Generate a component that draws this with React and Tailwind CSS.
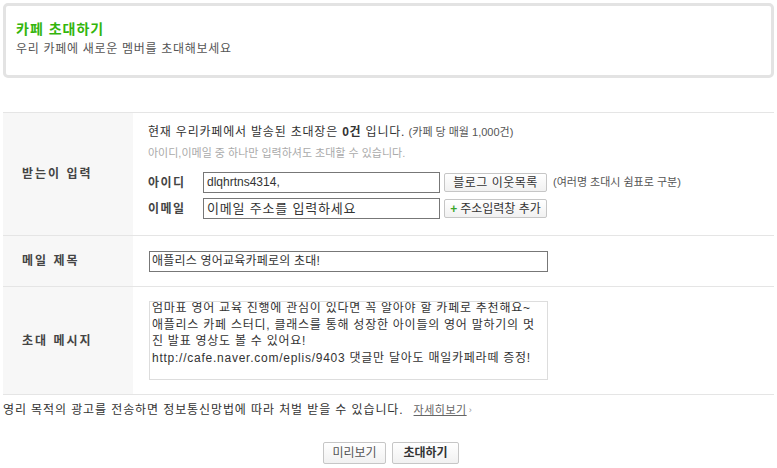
import React from 'react';

const font = { fontFamily: '"Liberation Sans", "Noto Sans CJK KR", sans-serif' };

const Btn = ({ children, className = '' }) => (
  <button
    className={`flex items-center justify-center border border-[#c6c6c6] rounded-[2px] bg-gradient-to-b from-white to-[#f1f1f1] text-[#333] ${className}`}
  >
    {children}
  </button>
);

const Row = ({ label, className = '', children }) => (
  <div className={`flex border-b border-[#e5e5e5] ${className}`}>
    <div className="w-[130px] shrink-0 bg-[#f7f7f7] flex items-center pl-[19px] text-[12px] font-bold text-[#444] tracking-[2px]">
      {label}
    </div>
    <div className="flex-1 pl-[15px]">{children}</div>
  </div>
);

export default function App() {
  return (
    <div className="w-[777px] h-[468px] bg-white overflow-hidden text-[#333]" style={font}>
      <div className="mx-[3px] mt-[3px] h-[75px] border-[3px] border-[#e3e3e3] rounded-[5px] pl-[10px] pt-[14px]">
        <h1 className="text-[14px] leading-[18px] font-bold text-[#33b50c] tracking-[1px]">카페 초대하기</h1>
        <p className="mt-[3px] text-[12px] leading-[16px] text-[#555] tracking-[0.7px]">우리 카페에 새로운 멤버를 초대해보세요</p>
      </div>

      <div className="mx-[3px] mt-[34px] border-t border-[#e5e5e5]">
        <Row label="받는이 입력" className="h-[123px]">
          <div className="pt-[11px]">
            <p className="text-[12px] leading-[16px] h-[16px]">
              <span className="tracking-[0.8px]">현재 우리카페에서 발송된 초대장은 <b>0건</b> 입니다.</span>{' '}
              <span className="text-[11px] text-[#555]">(카페 당 매월 1,000건)</span>
            </p>
            <p className="mt-[5px] text-[11px] leading-[16px] h-[16px] text-[#aaa]">
              아이디,이메일 중 하나만 입력하셔도 초대할 수 있습니다.
            </p>
            <div className="mt-[11px] flex items-center">
              <span className="w-[55px] text-[12px] font-bold text-[#444] tracking-[1.5px]">아이디</span>
              <div className="w-[237px] h-[21px] border border-[#777] pl-[3px] text-[12px] leading-[19px]">dlqhrtns4314,</div>
              <Btn className="ml-[4px] w-[103px] h-[19px] text-[12px] tracking-[0.5px]">블로그 이웃목록</Btn>
              <span className="ml-[6px] text-[11px] text-[#555]">(여러명 초대시 쉼표로 구분)</span>
            </div>
            <div className="mt-[5px] flex items-center">
              <span className="w-[55px] text-[12px] font-bold text-[#444] tracking-[1.5px]">이메일</span>
              <div className="w-[237px] h-[21px] border border-[#777] pl-[3px] text-[13px] leading-[19px] tracking-[0.8px]">이메일 주소를 입력하세요</div>
              <Btn className="ml-[4px] w-[103px] h-[19px] text-[12px]">
                <span className="text-[#3aa52a] font-bold mr-[3px]">+</span>주소입력창 추가
              </Btn>
            </div>
          </div>
        </Row>

        <Row label="메일 제목" className="h-[51px]">
          <div className="pt-[15px] pl-[1px]">
            <div className="w-[399px] h-[21px] border border-[#777] pl-[2px] text-[12px] leading-[19px] tracking-[0.2px]">
              애플리스 영어교육카페로의 초대!
            </div>
          </div>
        </Row>

        <Row label="초대 메시지" className="h-[108px]">
          <div className="pt-[14px] pl-[1px]">
            <div className="w-[399px] h-[79px] border border-[#ddd] overflow-hidden">
              <div className="-mt-[2px] pl-[2px] text-[12px] leading-[16.5px] text-[#333] tracking-[0.75px]">
                <p>엄마표 영어 교육 진행에 관심이 있다면 꼭 알아야 할 카페로 추천해요~</p>
                <p>애플리스 카페 스터디, 클래스를 통해 성장한 아이들의 영어 말하기의 멋</p>
                <p>진 발표 영상도 볼 수 있어요!</p>
                <p>http://cafe.naver.com/eplis/9403 댓글만 달아도 매일카페라떼 증정!</p>
              </div>
            </div>
          </div>
        </Row>
      </div>

      <p className="mt-[7px] pl-[3px] text-[12px] leading-[16px] flex items-center">
        <span className="tracking-[0.9px]">영리 목적의 광고를 전송하면 정보통신망법에 따라 처벌 받을 수 있습니다.</span>
        <a className="ml-[10px] text-[#666] underline text-[11px] tracking-[0.5px]">자세히보기</a>
        <span className="ml-[2px] text-[9px] text-[#999]">›</span>
      </p>

      <div className="mt-[24px] flex justify-center gap-[6px] pl-[5px]">
        <Btn className="w-[63px] h-[22px] text-[12px] text-[#555]">미리보기</Btn>
        <Btn className="w-[67px] h-[22px] text-[12px] font-bold">초대하기</Btn>
      </div>
    </div>
  );
}
